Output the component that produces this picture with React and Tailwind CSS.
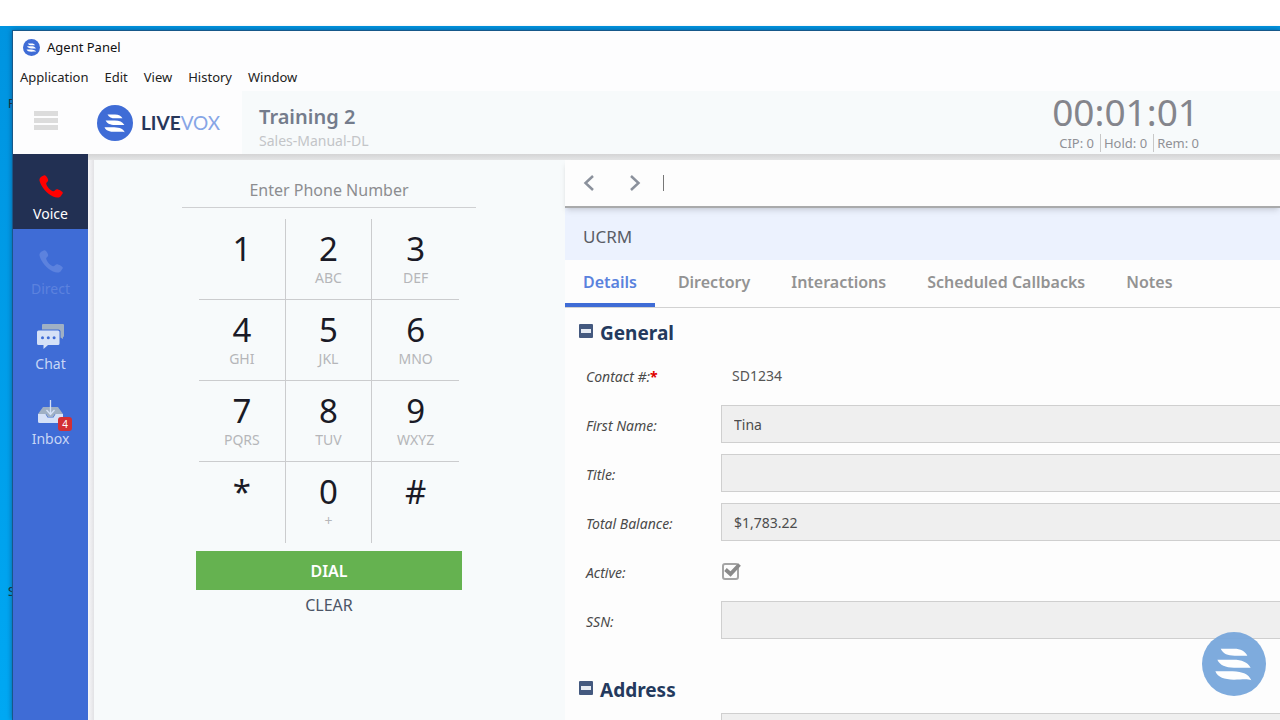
import React from "react";

const Waves = ({ className, disc }) => (
  <svg viewBox="0 0 192 192" className={className} aria-hidden="true">
    <circle cx="96" cy="96" r="96" fill={disc} />
    <path fill="#fff" d="M56 50H96C116 50 129 57 136 71H98C77 70 64 66 56 50ZM46 83H94C120 83 136 90 146 107H96C70 106 54 100 46 83ZM40 118H92C122 119 140 127 148 145C136 140 120 143 96 143C66 142 48 137 40 118Z" />
  </svg>
);

const Phone = ({ className }) => (
  <svg viewBox="0 0 24 23" className={className} fill="currentColor" aria-hidden="true">
    <path d="M2.6 1.4 5.2.2C6.8-.4 9.2 3.6 9.2 5.2 9.2 6.8 7 7.2 7.2 8.8 7.8 11.6 11 15.4 14 16.3 15.5 16.6 16.4 14.3 18 14.2 19.6 14.2 24 16.6 23.9 18L21.6 21.4C19.6 23 17 23 14 21.5 8 18.6 2.2 12 .6 6 .1 4 .9 2.4 2.6 1.4Z" />
  </svg>
);

const Chat = ({ className }) => (
  <svg viewBox="0 0 27 25" className={className} aria-hidden="true">
    <path fill="#9fb0c4" d="M6 0H26Q27 0 27 1V12Q27 13 26 13V15L23.500 13.500V7Q23 5.500 21.500 5.500H5V1Q5 0 6 0Z" />
    <path fill="#d5e1f7" d="M1.500 6.500H21Q22.500 6.500 22.500 8V19.500Q22.500 21 21 21H11L6.500 25V21H1.500Q0 21 0 19.500V8Q0 6.500 1.500 6.500Z" />
    <g fill="#3f6cd6">
      <circle cx="5.500" cy="13.800" r="1.500" />
      <circle cx="11.300" cy="13.800" r="1.500" />
      <circle cx="17.100" cy="13.800" r="1.500" />
    </g>
  </svg>
);

const Inbox = ({ className }) => (
  <svg viewBox="0 0 25 23" className={className} aria-hidden="true">
    <path fill="#9fb0c4" d="M5 7H20L25 14H17L15 17H10L8 14H0Z" />
    <path fill="#d5e1f7" d="M0 14H7.500L9.500 17.500H15.500L17.500 14H25V21.500Q25 23 23.500 23H1.500Q0 23 0 21.500Z" />
    <path fill="none" stroke="#d5e1f7" strokeWidth="1.300" d="M12.500 0V13.500M8.500 10L12.500 14.500L16.500 10" />
  </svg>
);

const nav = [
  { name: "Voice", icon: <Phone className="h-[23px] w-6 text-[#ff0000]" />, style: "bg-[#223053] text-white" },
  { name: "Direct", icon: <Phone className="h-[23px] w-6" />, style: "text-[#5c82de]" },
  { name: "Chat", icon: <Chat className="h-[25px] w-[27px]" />, style: "text-[#c8d6f5]" },
  { name: "Inbox", icon: <Inbox className="h-[23px] w-[25px]" />, style: "text-[#c8d6f5]", badge: 4 },
];

const keys = [
  ["1", ""], ["2", "ABC"], ["3", "DEF"],
  ["4", "GHI"], ["5", "JKL"], ["6", "MNO"],
  ["7", "PQRS"], ["8", "TUV"], ["9", "WXYZ"],
  ["*", ""], ["0", "+"], ["#", ""],
];

const tabs = ["Details", "Directory", "Interactions", "Scheduled Callbacks", "Notes"];

const Section = ({ title, children }) => (
  <section>
    <h2 className="mb-2 flex h-[30px] items-center gap-[7px] pl-[14px] text-[19px] font-bold text-[#243a5e]">
      <button aria-label={"Collapse " + title} className="-mt-1 flex size-[14px] items-center justify-center rounded-[1px] bg-[#44597f]">
        <span className="h-1 w-[10px] bg-[#e6ebf3]" />
      </button>
      {title}
    </h2>
    <div className="flex flex-col gap-[11px]">{children}</div>
  </section>
);

const Row = ({ id, label, required, children }) => (
  <div className="flex h-[38px] items-center pl-[21px]">
    <label htmlFor={id} className="w-[135px] shrink-0 pt-[2px] text-[14px] text-[#4a4a4a] italic">
      {label}
      {required && <span className="font-bold text-[#e00000] not-italic">*</span>}
    </label>
    {children}
  </div>
);

const inputStyle = "h-[38px] min-w-0 flex-1 border border-r-0 border-[#cfcfcf] bg-[#efefef] px-3 text-[14px] text-[#4c4c4c] outline-none";

const Field = ({ id, label, value }) => (
  <Row id={id} label={label}>
    <input id={id} readOnly defaultValue={value} className={inputStyle} />
  </Row>
);

export default function App() {
  return (
    <div className="flex h-screen flex-col overflow-hidden bg-white pt-[26px] font-['Noto_Sans',sans-serif]">
      <div className="relative flex min-h-0 flex-1 bg-[#00a2ed] bg-linear-to-b from-[#0094e0] to-[#00a8f3] pt-1 pl-3">
        <span className="absolute top-[69px] left-2 text-[12px] text-[#222]">F</span>
        <span className="absolute top-[557px] left-2 text-[12px] text-[#222]">S</span>
        <div className="relative flex min-w-0 flex-1 flex-col border-t border-l border-[#17588a] bg-[#fdfdfe] shadow-[0_0_5px_#0a5c96]">
          <div className="flex h-[33px] shrink-0 items-center gap-[7px] pl-[10px] text-[13px] text-[#111]">
            <Waves className="size-[17px]" disc="#3f6cd6" />
            Agent Panel
          </div>
          <nav className="flex h-[27px] shrink-0 items-center gap-4 pl-[7px] text-[13px] text-[#222]">
            {["Application", "Edit", "View", "History", "Window"].map((m) => (
              <button key={m}>{m}</button>
            ))}
          </nav>
          <header className="flex h-[63px] shrink-0 items-stretch">
            <div className="flex w-[229px] shrink-0 items-center pl-[21px]">
              <button aria-label="Menu" className="-mt-1 flex w-6 flex-col gap-[2px]">
                <span className="h-[5px] bg-[#dcdcdc]" />
                <span className="h-[5px] bg-[#dcdcdc]" />
                <span className="h-[5px] bg-[#dcdcdc]" />
              </button>
              <Waves className="ml-[39px] size-9" disc="#3f6cd6" />
              <span className="ml-2 pt-[2px] font-['Lato',sans-serif] text-[19px] font-bold text-[#27365a]">
                LIVE<span className="font-normal text-[#86a5e6]">VOX</span>
              </span>
            </div>
            <div className="flex flex-1 items-end justify-between bg-[#f7fafb] pr-[81px] pl-[17px]">
              <div className="pb-[3px]">
                <h1 className="text-[20px] leading-7 font-semibold text-[#747c8c]">Training 2</h1>
                <p className="text-[14px] leading-5 text-[#c3c5c8]">Sales-Manual-DL</p>
              </div>
              <div className="flex flex-col items-end pb-[2px]">
                <div className="text-[37px] leading-[44px] text-[#84858c]">00:01:01</div>
                <div className="flex text-[13px] leading-[18px] text-[#909196]">
                  <span className="pr-[6px]">CIP: 0</span>
                  <span className="border-l border-[#c8c8c8] pr-[6px] pl-[3px]">Hold: 0</span>
                  <span className="border-l border-[#c8c8c8] pl-[3px]">Rem: 0</span>
                </div>
              </div>
            </div>
          </header>
          <div className="flex min-h-0 flex-1">
            <aside className="w-[75px] shrink-0 bg-[#3f6cd6]">
              {nav.map((n) => (
                <button key={n.name} className={"relative flex h-[75px] w-full flex-col items-center pt-5 text-[14px] " + n.style}>
                  <span className="flex h-[25px] items-center">{n.icon}</span>
                  <span className="mt-[5px] leading-5">{n.name}</span>
                  {n.badge && (
                    <span className="absolute top-[38px] left-[45px] flex h-[14px] w-[14px] items-center justify-center rounded-[3px] bg-[#d22f35] text-[10px] leading-none text-white">{n.badge}</span>
                  )}
                </button>
              ))}
            </aside>
            <div className="flex min-w-0 flex-1 flex-col">
              <div className="h-[6px] shrink-0 bg-linear-to-b from-[#d4d4d5] to-[#e4e5e6]" />
              <div className="flex min-h-0 flex-1">
                <div className="w-[6px] shrink-0 bg-linear-to-r from-[#f8f8fa] to-[#e2e2e5]" />
                <section className="flex w-[471px] shrink-0 flex-col items-center bg-[#f7fafb] pt-3 pr-px">
                  <input aria-label="Phone number" placeholder="Enter Phone Number" className="h-9 w-[294px] border-b border-[#cfd0d2] bg-transparent text-center text-[16px] outline-none placeholder:text-[#8c8d90]" />
                  <div className="mt-[11px] grid w-[260px] grid-cols-3">
                    {keys.map(([k, sub], i) => (
                      <button key={k} className={"flex h-[81px] flex-col items-center border-[#cbccce] pt-[10px] " + (i % 3 < 2 ? "border-r " : "") + (i < 9 ? "border-b" : "")}>
                        <span className="text-[33px] leading-10 text-[#1a1a26]">{k}</span>
                        <span className="text-[14px] leading-[18px] text-[#b5b6b9]">{sub}</span>
                      </button>
                    ))}
                  </div>
                  <button className="mt-2 h-[39px] w-[266px] bg-[#65b250] text-[16px] font-semibold text-white">DIAL</button>
                  <button className="mt-[3px] text-[16px] leading-6 text-[#4c5566]">CLEAR</button>
                </section>
                <main className="flex min-w-0 flex-1 flex-col bg-[#fdfdfd]">
                  <div className="relative flex h-12 shrink-0 items-center border-b-2 border-[#a9aaab] pl-[18px] text-[#8b919c] shadow-md">
                    <button aria-label="Back">
                      <svg viewBox="0 0 12 18" className="h-[18px] w-3" fill="none" stroke="currentColor" strokeWidth="2.500"><path d="M10 2 2.500 9 10 16" /></svg>
                    </button>
                    <button aria-label="Forward" className="ml-[34px]">
                      <svg viewBox="0 0 12 18" className="h-[18px] w-3" fill="none" stroke="currentColor" strokeWidth="2.500"><path d="M2 2 9.500 9 2 16" /></svg>
                    </button>
                    <span className="ml-[22px] h-4 w-px bg-[#777]" />
                  </div>
                  <div className="flex h-[52px] shrink-0 items-center bg-[#ecf2fe] pt-[5px] pl-[18px] text-[17px] text-[#5a5d66]">UCRM</div>
                  <div role="tablist" className="flex h-12 shrink-0 gap-[5px] border-b border-[#d2d2d2]">
                    {tabs.map((t, i) => (
                      <button key={t} role="tab" aria-selected={i === 0} className={"border-b-4 px-[18px] text-[16px] font-semibold " + (i === 0 ? "border-[#3f6cd6] text-[#5a82dd]" : "border-transparent text-[#939393]")}>{t}</button>
                    ))}
                  </div>
                  <form className="flex flex-col gap-9 pt-[10px]">
                    <Section title="General">
                      <Row id="contact" label="Contact #:" required>
                        <output id="contact" className="pl-[11px] text-[14px] text-[#555]">SD1234</output>
                      </Row>
                      <Field id="first" label="First Name:" value="Tina" />
                      <Field id="title" label="Title:" value="" />
                      <Field id="balance" label="Total Balance:" value="$1,783.22" />
                      <Row id="active" label="Active:">
                        <span className="relative flex size-5 items-center">
                          <input id="active" type="checkbox" defaultChecked className="ml-px size-[17px] appearance-none rounded-[3px] border-2 border-[#a5a5a5]" />
                          <svg viewBox="0 0 20 20" className="pointer-events-none absolute inset-0 size-5" aria-hidden="true">
                            <path d="M4.500 8.500 9.500 13 18.500 3.500" fill="none" stroke="#8a8a8a" strokeWidth="3.800" />
                          </svg>
                        </span>
                      </Row>
                      <Field id="ssn" label="SSN:" value="" />
                    </Section>
                    <Section title="Address">
                      <div className="flex pl-[156px]">
                        <input aria-label="Address" readOnly className={inputStyle} />
                      </div>
                    </Section>
                  </form>
                </main>
              </div>
            </div>
          </div>
        </div>
        <button aria-label="LiveVox" className="absolute right-[14px] bottom-6 opacity-95">
          <Waves className="size-16" disc="#78a7dc" />
        </button>
      </div>
    </div>
  );
}
